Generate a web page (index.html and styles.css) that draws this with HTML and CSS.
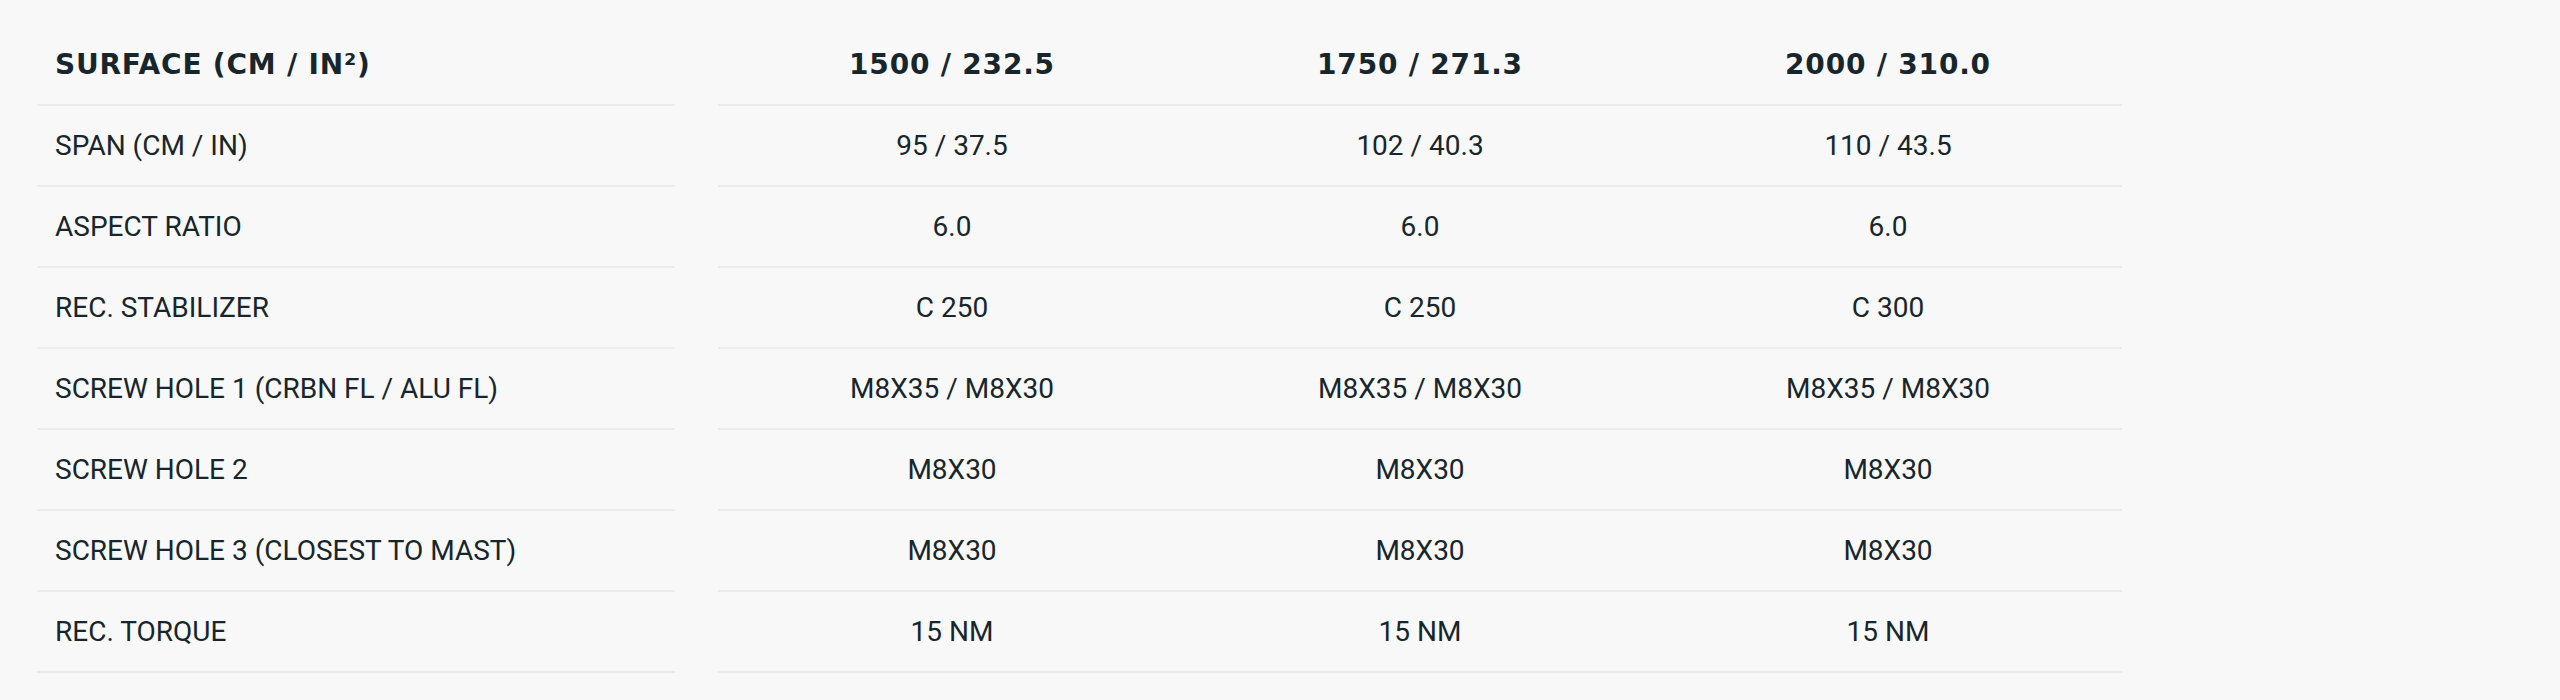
FILE: index.html
```html
<!DOCTYPE html>
<html lang="en">
<head>
<meta charset="utf-8">
<title>Specs</title>
<link rel="stylesheet" href="styles.css">
</head>
<body>
<div class="specs">
  <div class="row head">
    <div class="label">SURFACE (CM / IN²)</div>
    <div class="values">
      <div class="val">1500 / 232.5</div>
      <div class="val">1750 / 271.3</div>
      <div class="val">2000 / 310.0</div>
    </div>
  </div>
  <div class="row">
    <div class="label">SPAN (CM / IN)</div>
    <div class="values">
      <div class="val">95 / 37.5</div>
      <div class="val">102 / 40.3</div>
      <div class="val">110 / 43.5</div>
    </div>
  </div>
  <div class="row">
    <div class="label">ASPECT RATIO</div>
    <div class="values">
      <div class="val">6.0</div>
      <div class="val">6.0</div>
      <div class="val">6.0</div>
    </div>
  </div>
  <div class="row">
    <div class="label">REC. STABILIZER</div>
    <div class="values">
      <div class="val">C 250</div>
      <div class="val">C 250</div>
      <div class="val">C 300</div>
    </div>
  </div>
  <div class="row">
    <div class="label">SCREW HOLE 1 (CRBN FL / ALU FL)</div>
    <div class="values">
      <div class="val">M8X35 / M8X30</div>
      <div class="val">M8X35 / M8X30</div>
      <div class="val">M8X35 / M8X30</div>
    </div>
  </div>
  <div class="row">
    <div class="label">SCREW HOLE 2</div>
    <div class="values">
      <div class="val">M8X30</div>
      <div class="val">M8X30</div>
      <div class="val">M8X30</div>
    </div>
  </div>
  <div class="row">
    <div class="label">SCREW HOLE 3 (CLOSEST TO MAST)</div>
    <div class="values">
      <div class="val">M8X30</div>
      <div class="val">M8X30</div>
      <div class="val">M8X30</div>
    </div>
  </div>
  <div class="row">
    <div class="label">REC. TORQUE</div>
    <div class="values">
      <div class="val">15 NM</div>
      <div class="val">15 NM</div>
      <div class="val">15 NM</div>
    </div>
  </div>
</div>
</body>
</html>
```

FILE: styles.css
```css
html, body {
  margin: 0;
  padding: 0;
  background: #f8f8f8;
}

body {
  color: #17262c;
  font-family: Roboto, "Liberation Sans", sans-serif;
}

.specs {
  display: flex;
  flex-direction: column;
  padding: 25px 0 0 37px;
}

.row {
  display: flex;
  height: 81px;
}

.label {
  box-sizing: border-box;
  width: 638px;
  margin-right: 43px;
  padding-left: 18px;
  display: flex;
  align-items: center;
  border-bottom: 2px solid #ececec;
  font-size: 28px;
}

.values {
  display: flex;
}

.val {
  box-sizing: border-box;
  width: 468px;
  display: flex;
  align-items: center;
  justify-content: center;
  border-bottom: 2px solid #ececec;
  font-size: 28px;
}

.head .label,
.head .val {
  font-family: "DejaVu Sans", "Liberation Sans", sans-serif;
  font-weight: 700;
  font-size: 28px;
  letter-spacing: 0.8px;
}
```
